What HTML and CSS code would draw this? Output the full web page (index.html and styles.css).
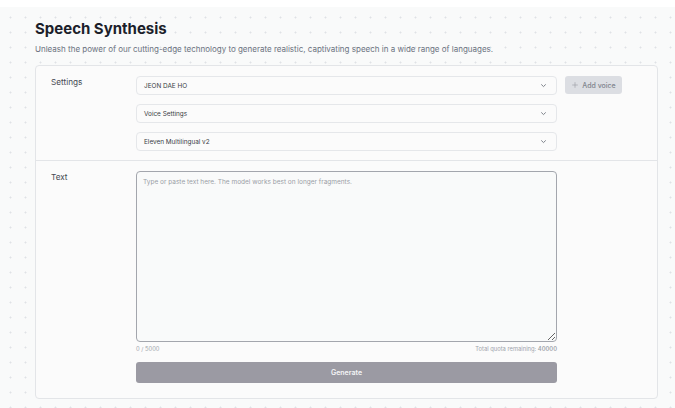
FILE: index.html
```
<!DOCTYPE html>
<html lang="en">
<head>
    <meta charset="UTF-8">
    <title>Speech Synthesis</title>
    <link rel="stylesheet" href="styles.css">
</head>
<body>
<div class="page">
    <h1 class="title">Speech Synthesis</h1>
    <p class="lead">Unleash the power of our cutting-edge technology to generate realistic, captivating speech in a wide range of languages.</p>
    <div class="card">
        <div class="section">
            <div class="label">Settings</div>
            <div class="fields">
                <div class="row">
                    <div class="select">
                        <span>JEON DAE HO</span>
                        <svg viewBox="0 0 10 10"><path d="M2.5 3.8 5 6.2 7.5 3.8"/></svg>
                    </div>
                    <button class="add"><svg viewBox="0 0 10 10"><path d="M5 1.5v7M1.5 5h7"/></svg>Add voice</button>
                </div>
                <div class="row">
                    <div class="select">
                        <span>Voice Settings</span>
                        <svg viewBox="0 0 10 10"><path d="M2.5 3.8 5 6.2 7.5 3.8"/></svg>
                    </div>
                </div>
                <div class="row">
                    <div class="select">
                        <span>Eleven Multilingual v2</span>
                        <svg viewBox="0 0 10 10"><path d="M2.5 3.8 5 6.2 7.5 3.8"/></svg>
                    </div>
                </div>
            </div>
        </div>
        <div class="section text-section">
            <div class="label">Text</div>
            <div class="fields">
                <textarea class="input" placeholder="Type or paste text here. The model works best on longer fragments."></textarea>
                <div class="meta">
                    <span>0 / 5000</span>
                    <span>Total quota remaining: <b>40000</b></span>
                </div>
                <button class="generate">Generate</button>
            </div>
        </div>
    </div>
</div>
</body>
</html>
```
FILE: styles.css
```
*{
    margin: 0;
    padding: 0;
    box-sizing: border-box;
}
body{
    background: #fff;
    font-family: Inter, "Noto Sans", sans-serif;
}
.page{
    margin-top: 7px;
    height: 401px;
    padding: 12px 18px 0 35px;
    background-color: #f9fafa;
    background-image: radial-gradient(circle, #dfe2e6 0.8px, transparent 1.2px);
    background-size: 15px 15px;
    background-position: 3px 3px;
}
.title{
    font-size: 15px;
    font-weight: 700;
    color: #1c1f2b;
    line-height: 19px;
}
.lead{
    margin-top: 6px;
    font-size: 8px;
    color: #6b7280;
    line-height: 11px;
}
.card{
    margin-top: 10px;
    width: 623px;
    background: #fbfbfb;
    border: 1px solid #e3e5e8;
    border-radius: 4px;
}
.section{
    display: flex;
    padding: 10px 15px 9px 15px;
}
.text-section{
    border-top: 1px solid #e3e5e8;
    padding-top: 10px;
    padding-bottom: 15px;
}
.label{
    width: 85px;
    font-size: 8.2px;
    color: #444852;
    line-height: 11px;
    padding-top: 1px;
}
.text-section .label{
    padding-top: 1px;
}
.fields{
    display: flex;
    flex-direction: column;
    gap: 9px;
}
.row{
    display: flex;
    gap: 8px;
}
.select{
    width: 421px;
    height: 19px;
    display: flex;
    align-items: center;
    justify-content: space-between;
    padding: 0 8px 0 7px;
    background: #fbfbfb;
    border: 1px solid #e5e7ea;
    border-radius: 4px;
    font-size: 6.4px;
    color: #3a3d45;
}
.select svg{
    width: 9px;
    height: 9px;
    fill: none;
    stroke: #7a7f88;
    stroke-width: 1.1;
}
.add{
    width: 57px;
    height: 18px;
    display: flex;
    align-items: center;
    justify-content: center;
    gap: 3px;
    border: none;
    border-radius: 3px;
    background: #dcdee3;
    color: #80848d;
    font-family: inherit;
    font-size: 7px;
    font-weight: 500;
}
.add svg{
    width: 8px;
    height: 8px;
    fill: none;
    stroke: #9a9ea6;
    stroke-width: 0.8;
}
.input{
    display: block;
    width: 421px;
    height: 171px;
    resize: vertical;
    border: 1px solid #a3a6ad;
    border-radius: 4px;
    background: #f9fafa;
    padding: 6px 6px;
    font-family: inherit;
    font-size: 6.5px;
    color: #3a3d45;
}
.input::placeholder{
    color: #9a9ea6;
}
.meta{
    display: flex;
    justify-content: space-between;
    margin-top: -6px;
    font-size: 5.8px;
    color: #a0a4ab;
}
.meta b{
    font-weight: 600;
    color: #a0a4ab;
}
.generate{
    margin-top: 1px;
    width: 421px;
    height: 21px;
    border: none;
    border-radius: 3px;
    background: #9b9aa3;
    color: #f4f4f6;
    font-family: inherit;
    font-size: 7px;
    font-weight: 600;
}
```
